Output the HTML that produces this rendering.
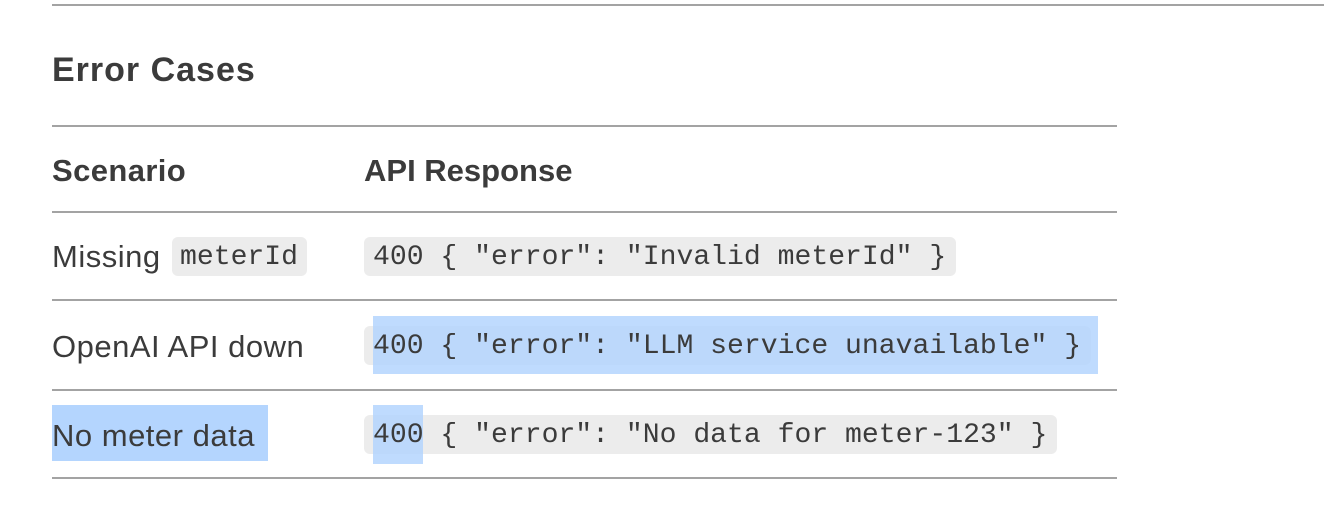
<!DOCTYPE html>
<html><head><meta charset="utf-8"><style>
html,body{margin:0;padding:0;background:#fff;width:1324px;height:506px;overflow:hidden}
body{position:relative;font-family:"Liberation Sans",sans-serif;color:#3b3b3b}
.ln{position:absolute;height:2px;background:#a3a3a3}
.t{position:absolute;white-space:nowrap;line-height:1;font-size:31px;letter-spacing:0.5px}
.b{font-weight:bold}
.c{position:absolute;background:#ececec;border-radius:6px;height:39px}
.m{position:absolute;font-family:"Liberation Mono",monospace;font-size:28.1px;white-space:nowrap;line-height:1;color:#3b3b3b}
.s{position:absolute;background:#b4d5fe}
</style></head><body>
<div class="ln" style="left:52px;top:4px;width:1272px"></div>
<div class="t b" style="left:52px;top:53px;font-size:34px;letter-spacing:1.0px">Error Cases</div>
<div class="ln" style="left:52px;top:125px;width:1065px"></div>
<div class="t b" style="left:52px;top:155px;letter-spacing:0.4px">Scenario</div>
<div class="t b" style="left:364px;top:155px;letter-spacing:0px">API Response</div>
<div class="ln" style="left:52px;top:211px;width:1065px"></div>

<div class="c" style="left:172px;top:237px;width:135px"></div>
<div class="c" style="left:364px;top:237px;width:592px"></div>
<div class="t" style="left:52px;top:241px">Missing</div>
<div class="m" style="left:180px;top:244px">meterId</div>
<div class="m" style="left:373px;top:244px">400 { "error": "Invalid meterId" }</div>
<div class="ln" style="left:52px;top:299px;width:1065px"></div>

<div class="c" style="left:364px;top:326px;width:727px"></div>
<div class="s" style="left:373px;top:316px;width:725px;height:58px;opacity:.85"></div>
<div class="t" style="left:52px;top:331px">OpenAI API down</div>
<div class="m" style="left:373px;top:333px">400 { "error": "LLM service unavailable" }</div>
<div class="ln" style="left:52px;top:389px;width:1065px"></div>

<div class="c" style="left:364px;top:415px;width:693px"></div>
<div class="s" style="left:52px;top:405px;width:216px;height:56px"></div>
<div class="s" style="left:373px;top:405px;width:50px;height:59px;opacity:.85"></div>
<div class="t" style="left:52px;top:420px">No meter data</div>
<div class="m" style="left:373px;top:422px">400 { "error": "No data for meter-123" }</div>
<div class="ln" style="left:52px;top:477px;width:1065px"></div>
</body></html>
